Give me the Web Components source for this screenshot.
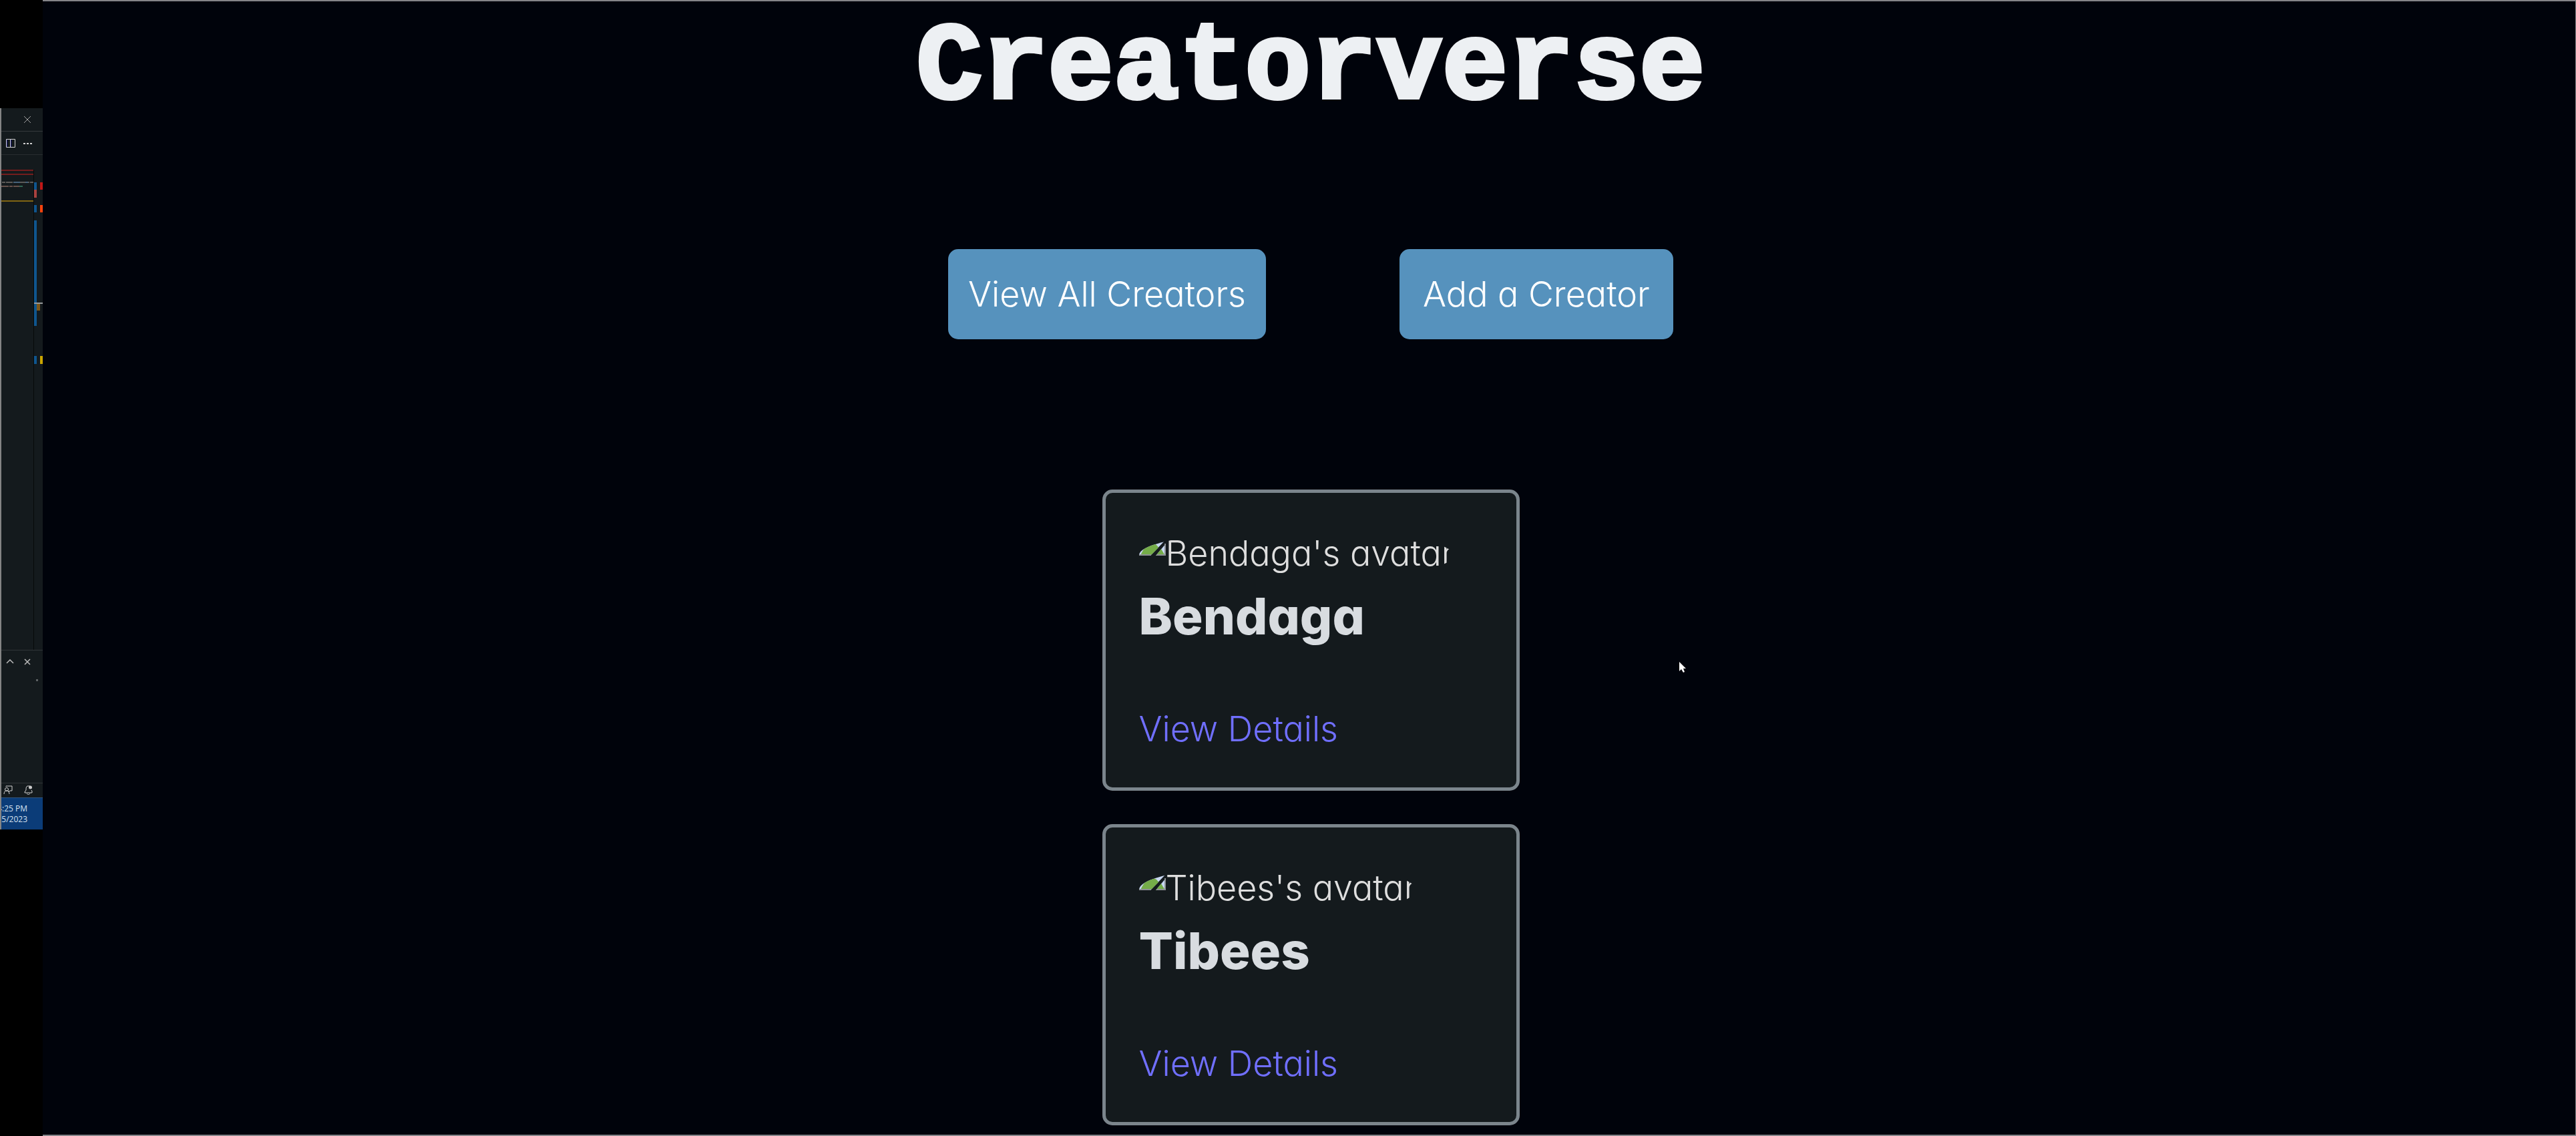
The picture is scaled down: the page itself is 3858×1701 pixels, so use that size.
<!DOCTYPE html>
<html lang="en">
<head>
<meta charset="utf-8">
<title>Creatorverse</title>
<style>
html, body { margin: 0; min-height: 100%; background: #000; }
body { font-family: Inter, "Open Sans", sans-serif; font-weight: 300; font-size: 52px; color: #dedede; overflow: hidden; }
</style>
</head>
<body>
<creator-desktop></creator-desktop>
<script>
const define = (name, html) => {
  const template = document.createElement('template');
  template.innerHTML = html;
  customElements.define(name, class extends HTMLElement {
    constructor() {
      super();
      this.attachShadow({ mode: 'open' }).append(template.content.cloneNode(true));
    }
  });
};

define('nav-button', `
<style>
:host { display: block; }
button { display: block; margin: 0; border: 0; border-radius: 15px; min-width: 410px; padding: 30px; background: #5692bd; color: #fff;
  font: inherit; font-feature-settings: "cv11"; line-height: 75px; white-space: nowrap; }
</style>
<button type="button"><slot></slot></button>`);

define('creator-card', `
<style>
:host { display: flex; flex-direction: column; align-items: flex-start; box-sizing: border-box; width: 625px;
  padding: 56px 50px 50px; border: 5px solid #7b858c; border-radius: 15px; background: #141a1d; font-feature-settings: "cv11"; }
.avatar { display: flex; height: 75px; line-height: 70px; border-radius: 50%; overflow: hidden; white-space: nowrap; }
svg { flex: none; width: 40px; height: 40px; margin-top: -2px; }
h2 { margin: 0 0 79px; font-size: 76px; line-height: 106px; font-weight: 800; color: #d8dce0; }
a { line-height: 75px; color: #706fff; text-decoration: none; }
</style>
<div class="avatar">
  <svg viewBox="0 0 40 40" aria-hidden="true">
    <path d="M0 0H40V16L17 40H0Z" fill="#c8d7f2"/>
    <path d="M2 40C6 30 12 22 19 22C24 22 27 24 29 28L17 40Z" fill="#75ac49"/>
    <path d="M40 22V40H25Z" fill="#c8d7f2"/>
    <path d="M33 30L39 40H25Z" fill="#75ac49"/>
    <path d="M0 39H18M26 39H40M39 22V40" stroke="#8c9094" stroke-width="2"/>
  </svg><slot name="avatar"></slot>
</div>
<h2><slot name="name"></slot></h2>
<a href="#details">View Details</a>`);

define('creator-page', `
<style>
:host { display: flex; flex-direction: column; align-items: center; box-sizing: border-box; position: relative;
  padding: 0 0 14px 5px; background: #00030b; border: solid #848488; border-width: 2px 1px 2px 0; }
h1 { margin: 0 0 171px; font: 700 164px/200px "Liberation Mono", monospace; color: #edf0f3; -webkit-text-stroke: 6px #edf0f3; }
nav { display: flex; gap: 200px; margin-bottom: 225px; }
section { display: flex; flex-direction: column; gap: 50px; }
.pointer { position: absolute; left: 2450px; top: 988px; width: 12px; height: 18px; }
</style>
<h1>Creatorverse</h1>
<nav><nav-button>View All Creators</nav-button><nav-button>Add a Creator</nav-button></nav>
<section>
  <creator-card><span slot="avatar">Bendaga's avatar</span><span slot="name">Bendaga</span></creator-card>
  <creator-card><span slot="avatar">Tibees's avatar</span><span slot="name">Tibees</span></creator-card>
</section>
<svg class="pointer" viewBox="0 0 12 18" aria-hidden="true"><path d="M1 1V15L4 12L7 17L9 16L7 11H11Z" fill="#fff"/></svg>`);

define('editor-edge', `
<style>
:host { display: flex; flex-direction: column; box-sizing: border-box; width: 64px; padding-top: 162px; overflow: hidden; background: #000; }
.window { display: flex; flex-direction: column; border-left: 2px solid #848484; background: #141a1d; }
svg { display: block; fill: none; stroke: #d0d0d0; }
.minimap { stroke: none; }
.clock { display: flex; flex-direction: column; align-items: flex-end; box-sizing: border-box; height: 48px; padding: 8px 23px 8px 0;
  background: #0b3c78; border-top: 1px solid #33547b; color: #d5e2f0; font: 400 12px/16px "Open Sans", sans-serif; overflow: hidden; white-space: nowrap; }
</style>
<div class="window">
  <svg width="62" height="70" viewBox="0 0 62 70" aria-hidden="true">
    <path d="M34 12L44 22M44 12L34 22" stroke="#a0a0a0"/>
    <path d="M0 34.5H62" stroke="#35393c"/><path d="M0 69.5H62" stroke="#282d30"/>
    <path d="M7.500 46.500H20.500V58.500H7.500ZM13.500 46.500V58.500"/><path d="M8.500 47V58M14.500 47V58" stroke="#151575"/>
    <path d="M33 53H36M38 53H41M43 53H46" stroke-width="2"/>
  </svg>
  <svg class="minimap" width="62" height="741" viewBox="0 0 62 741" aria-hidden="true">
    <path d="M0 22H48V24H0ZM0 28H48V30H0Z" fill="#731d1d"/>
    <path d="M0 68H48V70H0Z" fill="#806513"/>
    <path d="M48 22H49V741H48Z" fill="#060909"/>
    <path d="M1 41h47" stroke="#5c5a58" stroke-width="2" stroke-dasharray="5 1 10 1 3 1"/>
    <path d="M18 41h10M36 41h4" stroke="#46617a" stroke-width="2"/>
    <path d="M0 47h32" stroke="#66514b" stroke-width="2" stroke-dasharray="11 1 5 1"/>
    <path d="M27 47h5" stroke="#326653" stroke-width="2"/>
    <path d="M49 41H53V52H49ZM49 75H53V86H49ZM49 98H53V256H49ZM49 301H53V313H49Z" fill="#0f568f"/>
    <path d="M49 52H53V64H49Z" fill="#a8413f"/><path d="M58 41H62V52H58Z" fill="#c01717"/>
    <path d="M58 75H62V86H58Z" fill="#fc430d"/><path d="M49 221H62V223H49Z" fill="#96999b"/>
    <path d="M53 223H58V233H53Z" fill="#7d5719"/><path d="M58 301H62V313H58Z" fill="#cba600"/>
  </svg>
  <svg width="62" height="221" viewBox="0 0 62 221" aria-hidden="true">
    <path d="M0 .5H62M0 199.500H62" stroke="#303538"/>
    <path d="M8 20L13 15L18 20M35 14L43 22M43 14L35 22" stroke="#bbb" stroke-width="1.500"/>
    <path d="M52 44h3v3h-3z" fill="#5d6264" stroke="none"/>
    <path d="M7 205V204H16V211H13L11 213V211M4 216C4 209 12 209 12 216"/><circle cx="8" cy="209" r="2.500"/>
    <path d="M43 204H39C37 205 37 207 37 210L35 213V214H46V212L45 210M38 215C39 217 42 217 43 215"/><circle cx="43.500" cy="206" r="2.500" fill="#ccc" stroke="none"/>
  </svg>
  <div class="clock"><span>4:25 PM</span><span>7/25/2023</span></div>
</div>`);

define('creator-desktop', `
<style>
:host { display: grid; grid-template-columns: 64px minmax(0, 1fr); }
</style>
<editor-edge></editor-edge><creator-page></creator-page>`);
</script>
</body>
</html>
